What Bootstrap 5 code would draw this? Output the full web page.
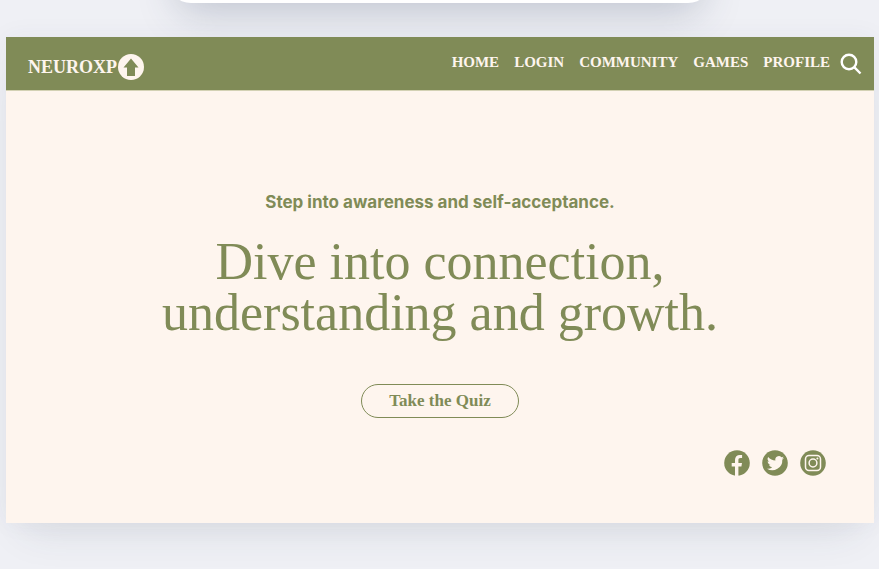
<!DOCTYPE html>
<html lang="en">
<head>
<meta charset="utf-8">
<meta name="viewport" content="width=device-width, initial-scale=1">
<title>NeuroXP</title>
<link rel="stylesheet" href="https://cdn.jsdelivr.net/npm/bootstrap@5.3.0/dist/css/bootstrap.min.css">
<style>
:root { --olive: #808b57; --cream: #fef5ee; }
body { background: #eff0f5; font-family: "Liberation Serif", serif; color: var(--olive); }
.prev-panel { width: 62%; height: 80px; margin-top: -77px; margin-bottom: 34px; background: #fff; border-radius: 24px; box-shadow: 0 20px 40px -12px rgba(50, 65, 95, .26); }
.frame { margin: 0 5px 45px 6px; background: var(--cream); box-shadow: 0 24px 40px -18px rgba(50, 65, 80, .12), 0 0 24px rgba(50, 65, 95, .05); }
.top-bar { background: var(--olive); padding: 12px 12px 10px 22px; border-bottom: 1px solid #d3d1b4; }
.brand { font-size: 18px; line-height: 26px; font-weight: 700; color: var(--cream); gap: 1px; padding-top: 5px; }
.menu { gap: 15px; }
.menu a { font-size: 15px; line-height: 26px; font-weight: 700; color: var(--cream); text-decoration: none; }
.search { margin-left: 10px; padding-top: 4px; line-height: 0; }
.hero { padding: 99px 48px 47px; }
.tagline { font: 700 17px/24px Inter, sans-serif; margin-bottom: 22px; }
.headline { font-size: 52px; line-height: 51px; font-weight: 400; margin-bottom: 46px; }
.quiz { font-size: 17px; line-height: 24px; font-weight: 700; padding: 4px 27px; color: var(--olive); border: 1px solid var(--olive); --bs-btn-hover-bg: var(--olive); --bs-btn-hover-color: var(--cream); }
.social { gap: 12px; margin-top: 32px; line-height: 0; }
</style>
</head>
<body>
<div class="prev-panel mx-auto"></div>
<div class="frame">
  <header class="top-bar d-flex align-items-start justify-content-between">
    <a class="brand d-flex align-items-center text-decoration-none" href="#"><span>NEUROXP</span>
      <svg width="26" height="26" viewBox="0 0 26 26" aria-hidden="true"><circle cx="13" cy="13" r="13" fill="#fef5ee"/><path d="M13 4.500 20.500 13.500H17V22H9v-8.500H5.500z" fill="#808b57"/></svg>
    </a>
    <nav class="d-flex align-items-start" aria-label="Main">
      <div class="menu d-flex">
        <a href="#">HOME</a><a href="#">LOGIN</a><a href="#">COMMUNITY</a><a href="#">GAMES</a><a href="#">PROFILE</a>
      </div>
      <button class="search btn px-0 pb-0 border-0" type="button" aria-label="Search">
        <svg width="22" height="22" viewBox="0 0 22 22" fill="none" stroke="#fff" stroke-width="2.400"><circle cx="9" cy="9" r="7.300"/><path d="m14.200 14.200 6.300 6.300"/></svg>
      </button>
    </nav>
  </header>
  <main class="hero text-center">
    <p class="tagline">Step into awareness and self-acceptance.</p>
    <h1 class="headline">Dive into connection,<br>understanding and growth.</h1>
    <button class="quiz btn rounded-pill" type="button">Take the Quiz</button>
    <div class="social d-flex justify-content-end">
      <a href="#" aria-label="Facebook"><svg width="26" height="26" viewBox="0 0 26 26"><circle cx="13" cy="13" r="12.800" fill="#808b57"/><path d="M11 26v-9.500H7.700v-3.600H11V10c0-3.300 2-5.100 4.900-5.100 1.100 0 2.200.2 2.200.2v3h-1.600c-1.600 0-2.100.9-2.100 1.900v2.900h3.600l-.6 3.600h-3V26z" fill="#fef5ee"/></svg></a>
      <a href="#" aria-label="Twitter"><svg width="26" height="26" viewBox="0 0 26 26"><circle cx="13" cy="13" r="12.800" fill="#808b57"/><path transform="translate(5 5)" d="M17 2.800a7 7 0 0 1-2 .6A3.500 3.500 0 0 0 16.600 1.500a7 7 0 0 1-2.200.8A3.500 3.500 0 0 0 8.400 5.500 10 10 0 0 1 1.200 1.900a3.500 3.500 0 0 0 1.100 4.700 3.500 3.500 0 0 1-1.600-.4 3.500 3.500 0 0 0 2.800 3.500 3.500 3.500 0 0 1-1.600 0 3.500 3.500 0 0 0 3.300 2.500A7 7 0 0 1 0 13.700 10 10 0 0 0 15.300 4.700 7 7 0 0 0 17 2.800z" fill="#fef5ee"/></svg></a>
      <a href="#" aria-label="Instagram"><svg width="26" height="26" viewBox="0 0 26 26" fill="none" stroke="#fef5ee" stroke-width="1.500"><circle cx="13" cy="13" r="12.800" fill="#808b57" stroke="none"/><rect x="5.500" y="5.500" width="15" height="15" rx="3.500"/><circle cx="13" cy="13" r="3.900"/><circle cx="17.400" cy="8.600" r="1" fill="#fef5ee" stroke="none"/></svg></a>
    </div>
  </main>
</div>
<script src="https://cdn.jsdelivr.net/npm/bootstrap@5.3.0/dist/js/bootstrap.bundle.min.js"></script>
</body>
</html>
